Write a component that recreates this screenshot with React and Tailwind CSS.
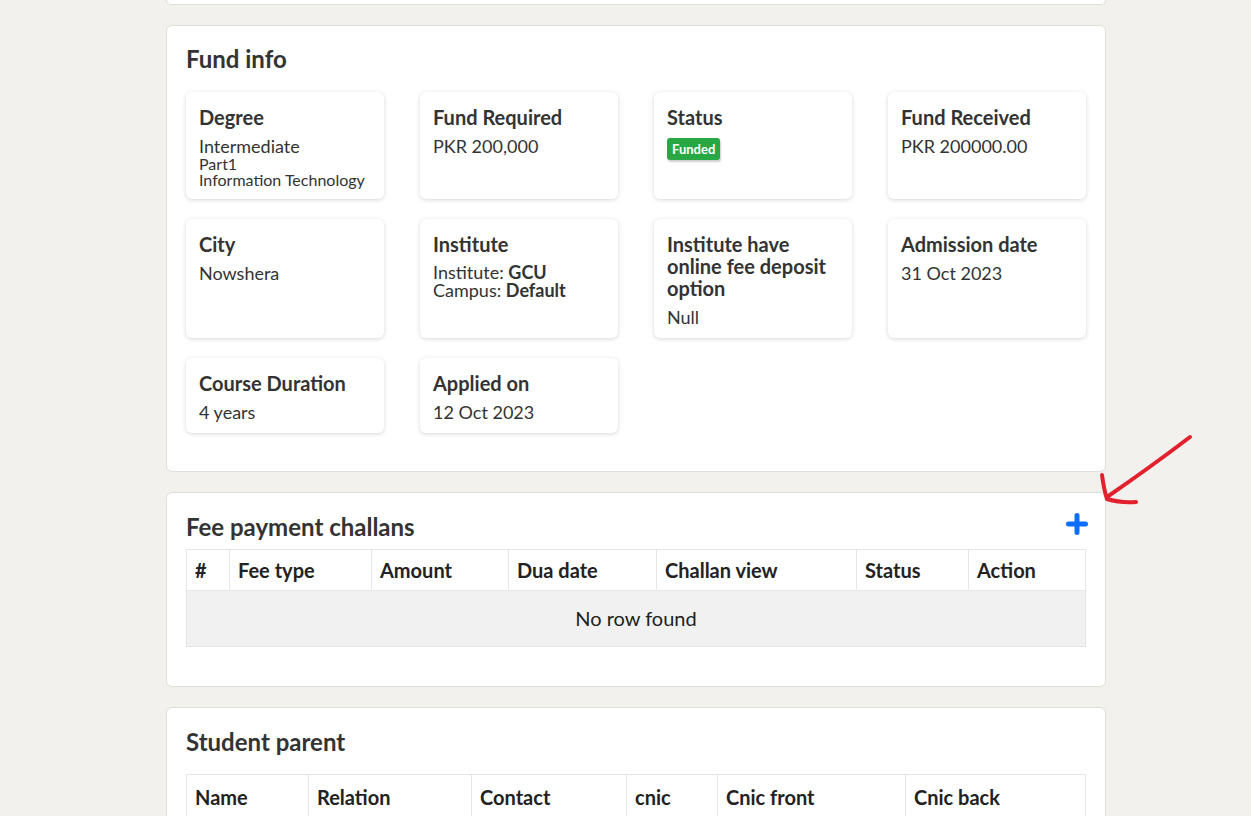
import React from "react";

function InfoCard({ title, children }) {
  return (
    <div className="bg-white rounded-[6px] shadow-[0_1px_4px_rgba(0,0,0,0.16)] pt-[14px] pb-[11px] px-[13px]">
      <div className="text-[20px] leading-[22px] font-bold text-[#333]">{title}</div>
      <div className="mt-2">{children}</div>
    </div>
  );
}

function Val({ children }) {
  return <div className="text-[18px] leading-[20px] text-[#333]">{children}</div>;
}

function Plus() {
  return (
    <svg width="22" height="22" viewBox="0 0 22 22">
      <path d="M11 2.5v17M2.5 11h17" stroke="#0d6efd" strokeWidth="5" strokeLinecap="round" />
    </svg>
  );
}

export default function App() {
  const feeCols = [
    ["#", 43],
    ["Fee type", 142],
    ["Amount", 137],
    ["Dua date", 148],
    ["Challan view", 200],
    ["Status", 112],
    ["Action", 117],
  ];
  const parentCols = [
    ["Name", 122],
    ["Relation", 163],
    ["Contact", 155],
    ["cnic", 91],
    ["Cnic front", 188],
    ["Cnic back", 180],
  ];
  return (
    <div
      className="min-h-[816px] bg-[#f2f1ee] pl-[166px] relative overflow-hidden"
      style={{ fontFamily: "Lato, 'Open Sans', sans-serif" }}
    >
      <div className="w-[940px] flex flex-col gap-5">
        <div className="h-[5px] bg-white border-x border-b border-[#e0dfdb] rounded-b-[6px]" />

        {/* Fund info */}
        <div className="bg-white border border-[#e0dfdb] rounded-[6px] px-[19px] pt-[19px] pb-[38px]">
          <div className="text-[24px] leading-[28px] font-bold text-[#333] mb-[19px]">Fund info</div>
          <div className="grid grid-cols-4 gap-x-[36px] gap-y-5">
            <InfoCard title="Degree">
              <Val>Intermediate</Val>
              <div className="text-[16px] leading-[16px] text-[#333]">Part1</div>
              <div className="text-[16px] leading-[16px] text-[#333]">Information Technology</div>
            </InfoCard>
            <InfoCard title="Fund Required">
              <Val>PKR 200,000</Val>
            </InfoCard>
            <InfoCard title="Status">
              <span className="inline-block mt-[2px] bg-[#28a745] text-white text-[13px] leading-[16px] font-bold px-[5px] py-[3px] rounded-[3px] shadow-[1px_2px_2px_rgba(0,0,0,0.2)]">
                Funded
              </span>
            </InfoCard>
            <InfoCard title="Fund Received">
              <Val>PKR 200000.00</Val>
            </InfoCard>
            <InfoCard title="City">
              <Val>Nowshera</Val>
            </InfoCard>
            <InfoCard title="Institute">
              <div className="text-[18px] leading-[18px] text-[#333]">
                Institute: <span className="font-bold">GCU</span>
              </div>
              <div className="text-[18px] leading-[18px] text-[#333]">
                Campus: <span className="font-bold">Default</span>
              </div>
            </InfoCard>
            <InfoCard title="Institute have online fee deposit option">
              <Val>Null</Val>
            </InfoCard>
            <InfoCard title="Admission date">
              <Val>31 Oct 2023</Val>
            </InfoCard>
            <InfoCard title="Course Duration">
              <Val>4 years</Val>
            </InfoCard>
            <InfoCard title="Applied on">
              <Val>12 Oct 2023</Val>
            </InfoCard>
          </div>
        </div>

        {/* Fee payment challans */}
        <div className="bg-white border border-[#e0dfdb] rounded-[6px] px-[19px] pt-[19px] pb-[39px]">
          <div className="flex items-center justify-between mb-[8px]">
            <div className="text-[24px] leading-[29px] font-bold text-[#333]">Fee payment challans</div>
            <div className="mr-[-2px] mt-[-6px]">
              <Plus />
            </div>
          </div>
          <table className="w-full border-collapse text-[#222]">
            <thead>
              <tr>
                {feeCols.map(([c, w]) => (
                  <th
                    key={c}
                    style={{ width: w }}
                    className="border border-[#e4e6e8] text-left font-bold text-[20px] leading-[24px] px-[8px] py-[8px]"
                  >
                    {c}
                  </th>
                ))}
              </tr>
            </thead>
            <tbody>
              <tr>
                <td colSpan={7} className="border border-[#e4e6e8] bg-[#f1f1f1] text-center text-[20px] leading-[23px] py-[16px]">
                  No row found
                </td>
              </tr>
            </tbody>
          </table>
        </div>

        {/* Student parent */}
        <div className="bg-white border border-[#e0dfdb] rounded-[6px] px-[19px] pt-[19px] pb-[40px]">
          <div className="text-[24px] leading-[29px] font-bold text-[#333] mb-[18px]">Student parent</div>
          <table className="w-full border-collapse text-[#222]">
            <thead>
              <tr>
                {parentCols.map(([c, w]) => (
                  <th
                    key={c}
                    style={{ width: w }}
                    className="border border-[#e4e6e8] text-left font-bold text-[20px] leading-[24px] px-[8px] py-[10px]"
                  >
                    {c}
                  </th>
                ))}
              </tr>
            </thead>
          </table>
        </div>
      </div>

      {/* red annotation arrow */}
      <svg className="absolute left-0 top-0 pointer-events-none" width="1251" height="816">
        <g fill="none" stroke="#e3202e" strokeWidth="4" strokeLinecap="round" strokeLinejoin="round">
          <path d="M1190 437 Q1152 466 1107 497" />
          <path d="M1102 475 Q1104 490 1107 499 Q1120 503 1136 502" />
        </g>
      </svg>
    </div>
  );
}
